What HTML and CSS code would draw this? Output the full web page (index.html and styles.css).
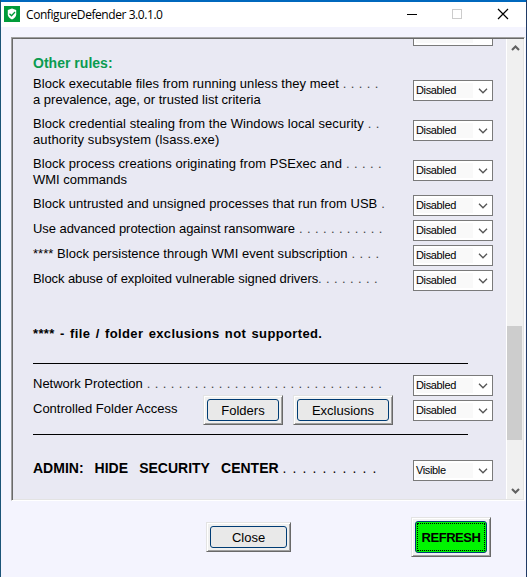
FILE: index.html
```html
<!DOCTYPE html>
<html lang="en">
<head>
<meta charset="utf-8">
<title>ConfigureDefender 3.0.1.0</title>
<link rel="stylesheet" href="styles.css">
</head>
<body>
<svg width="0" height="0" class="defs"><symbol id="chev" viewBox="0 0 10 6"><path d="M1 .8 5 4.8 9 .8" fill="none" stroke="#555" stroke-width="1.3"/></symbol>
<symbol id="arrow" viewBox="0 0 9 6"><path d="M1 5 4.500 1.500 8 5" fill="none" stroke="#606060" stroke-width="2.100"/></symbol></svg>
<div class="window">
  <header class="titlebar">
    <svg class="logo" width="16" height="16" viewBox="0 0 16 16"><path fill="#009b3a" d="M0 0h16v16H0z"/><path fill="#fff" d="M8 2.500 12.200 4v4.500Q12 11.500 8 13.600 4 11.500 3.800 8.500V4z"/><path d="m5.500 7.700 2 2 3.500-3.700" fill="none" stroke="#009b3a" stroke-width="1.300"/></svg>
    <span class="title">ConfigureDefender 3.0.1.0</span>
    <svg class="controls" width="102" height="12" viewBox="0 0 102 12" shape-rendering="crispEdges"><path d="M0 6.500h10" stroke="#000"/><path d="M45.500 1.500h9v9h-9z" fill="none" stroke="#ccc"/><path d="m91 1 10 10M101 1 91 11" stroke="#000" shape-rendering="auto" stroke-width="1.200"/></svg>
  </header>
  <main class="panel">
    <div class="content">
      <div class="cut"><div class="combo"><span></span></div></div>
      <h2>Other rules:</h2>
      <div class="row tall"><p><span class="t1">Block executable files from running unless they meet</span><i>. . . . .</i><br><span>a prevalence, age, or trusted list criteria</span></p><div class="combo"><span>Disabled</span><svg><use href="#chev"/></svg></div></div>
      <div class="row tall"><p><span class="t3">Block credential stealing from the Windows local security</span><i>. .</i><br><span class="t4">authority subsystem (lsass.exe)</span></p><div class="combo"><span>Disabled</span><svg><use href="#chev"/></svg></div></div>
      <div class="row tall last"><p><span class="t5">Block process creations originating from PSExec and</span><i>. . . . .</i><br><span>WMI commands</span></p><div class="combo"><span>Disabled</span><svg><use href="#chev"/></svg></div></div>
      <div class="row"><p><span class="t7">Block untrusted and unsigned processes that run from USB</span><i>.</i></p><div class="combo"><span>Disabled</span><svg><use href="#chev"/></svg></div></div>
      <div class="row"><p><span class="t8">Use advanced protection against ransomware</span><i>. . . . . . . . . . .</i></p><div class="combo"><span>Disabled</span><svg><use href="#chev"/></svg></div></div>
      <div class="row"><p><span class="t9">**** Block persistence through WMI event subscription</span><i>. . . .</i></p><div class="combo"><span>Disabled</span><svg><use href="#chev"/></svg></div></div>
      <div class="row"><p><span class="t10">Block abuse of exploited vulnerable signed drivers</span><i class="tight">. . . . . . . .</i></p><div class="combo"><span>Disabled</span><svg><use href="#chev"/></svg></div></div>
      <p class="note">**** - file / folder exclusions not supported.</p>
      <div class="rule"></div>
      <div class="row net"><p><span>Network Protection</span><i>. . . . . . . . . . . . . . . . . . . . . . . . . . . . . .</i></p><div class="combo"><span>Disabled</span><svg><use href="#chev"/></svg></div></div>
      <div class="row cfa"><p><span>Controlled Folder Access</span></p><button class="btn folders"><span>Folders</span></button><button class="btn excl"><span>Exclusions</span></button><div class="combo"><span>Disabled</span><svg><use href="#chev"/></svg></div></div>
      <div class="rule second"></div>
      <div class="row admin"><p><b>ADMIN:&nbsp; HIDE&nbsp; SECURITY&nbsp; CENTER</b><i>. . . . . . . . . .</i></p><div class="combo"><span>Visible</span><svg><use href="#chev"/></svg></div></div>
    </div>
    <div class="scrollbar"><svg class="up"><use href="#arrow"/></svg><div class="thumb"></div><svg class="down"><use href="#arrow"/></svg></div>
  </main>
  <footer><button class="btn close"><span>Close</span></button><button class="btn refresh"><span><em>REFRESH</em></span></button></footer>
</div>
</body>
</html>
```
FILE: styles.css
```css
* { box-sizing: border-box; }
body { margin: 0; background: #fff; font: 13px/16px "Liberation Sans", Arial, sans-serif; color: #000; overflow: hidden; }
p, h2 { margin: 0; }
.defs { position: absolute; }
.window { width: 527px; height: 577px; background: #f4f4fe; border-left: 1px solid #1b5478; border-right: 1px solid #203b66; display: flex; flex-direction: column; }
.titlebar { height: 27px; flex: none; border-top: 2px solid #0068bd; background: #fff; display: flex; align-items: center; padding: 0 17px 0 3px; }
.logo { margin-top: -1px; }
.title { font: 12px/16px "Open Sans", "Noto Sans", sans-serif; margin: 0 0 0 6px; letter-spacing: -.43px; }
.controls { margin-left: auto; margin-top: -1px; }
.panel { margin: 10px 1px 0 10px; height: 464px; flex: none; display: flex; border: 1px solid; border-color: #a0a0a0 #fff #fff #a0a0a0; box-shadow: inset 1px 1px #696969, inset -1px -1px #e3e3e3; padding: 1px; background: #e9e9f3; overflow: hidden; }
.content { width: 493px; padding-left: 20px; }
.cut { height: 7px; display: flex; align-items: flex-end; overflow: hidden; padding-left: 380px; }
.combo { width: 80px; height: 21px; flex: none; background: #fff; border: 1px solid #7a7a7a; display: flex; align-items: center; justify-content: space-between; padding: 0 4px 0 2px; }
.combo span { font: 11px/15px "Liberation Sans", Arial, sans-serif; letter-spacing: -.36px; width: 57px; height: 15px; background: #f9f9f9; }
.combo svg { width: 10px; height: 6px; }
h2 { font-size: 14px; line-height: 16px; color: #0a9b50; margin: 9px 0 6px; letter-spacing: .02px; height: 16px; }
.row { height: 25px; display: flex; align-items: flex-start; }
.row p { width: 380px; padding-top: 1px; white-space: nowrap; }
.row i { font-style: normal; margin-left: 4px; color: #444; letter-spacing: .38px; }
.row i.tight { margin-left: 0; }
.tall { height: 40px; }
.tall p { padding-top: 0; margin-top: -1px; }
.tall .combo { margin-top: 3px; }
.last { height: 38px; }
.t1, .t7, .t9 { letter-spacing: .045px; }
.t3 { letter-spacing: .075px; }
.t4 { letter-spacing: .14px; }
.t5 { letter-spacing: .065px; }
.t8 { letter-spacing: -.06px; }
.t10 { letter-spacing: -.08px; }
.note { font-weight: bold; margin-top: 31px; letter-spacing: .36px; word-spacing: 1.4px; }
.rule { width: 435px; height: 1px; background: #000; margin-top: 21px; }
.net { margin-top: 11px; }
.cfa { height: 33px; }
.cfa p { width: 170px; }
.cfa .btn { margin-top: -5px; }
.excl { margin-left: 10px; }
.cfa .combo { margin-left: 20px; }
.second { margin-top: 1px; }
.admin { margin-top: 25px; }
.admin p { font-size: 14px; padding-top: 0; }
.admin b { word-spacing: 1.65px; }
.admin i { letter-spacing: 1.1px; color: #000; }
.scrollbar { width: 17px; background: #f0f0f0; border-left: 1px solid #fff; display: flex; flex-direction: column; align-items: center; }
.scrollbar svg { width: 9px; height: 6px; flex: none; }
.up { margin-top: 6px; }
.down { transform: scaleY(-1); margin-top: 48px; }
.thumb { width: 15px; height: 114px; background: #cdcdcd; margin-top: 275px; flex: none; align-self: flex-start; }
.btn { flex: none; padding: 3px; height: 30px; background: #f0f0f0; color: #000; border: 1px solid; border-color: #e3e3e3 #696969 #696969 #e3e3e3; box-shadow: inset 1px 1px #fff, inset -1px -1px #a0a0a0; font: inherit; }
.btn > span { display: flex; align-items: center; justify-content: center; height: 100%; padding-top: 2px; background: #e9e9e9; border: 1px solid #003c74; border-radius: 3px; }
.folders { width: 80px; }
.excl { width: 100px; }
footer { display: flex; align-items: center; height: 30px; margin: 21px 0 0 205px; }
.close { width: 85px; }
.refresh { width: 80px; height: 40px; margin-left: 120px; }
.btn.refresh > span { background: #00f500; padding: 1px; }
.refresh em { font-style: normal; font-weight: bold; letter-spacing: -.45px; border: 1px dotted #000; width: 100%; height: 100%; display: flex; align-items: center; justify-content: center; padding-top: 1px; }
```
